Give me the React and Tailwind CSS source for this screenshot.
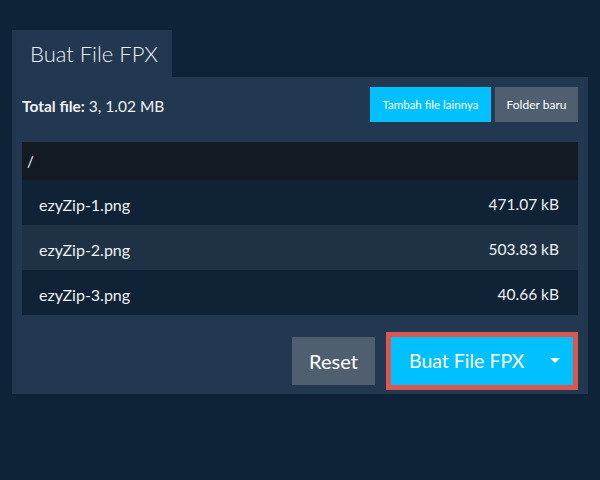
import { useState } from 'react';

const files = [
  { name: 'ezyZip-1.png', size: '471.07 kB' },
  { name: 'ezyZip-2.png', size: '503.83 kB' },
  { name: 'ezyZip-3.png', size: '40.66 kB' },
];

function App() {
  const [list] = useState(files);

  return (
    <div className="min-h-[480px] bg-[#0f2338] px-3 pt-[30px] text-[#eef1f4]" style={{ fontFamily: 'Lato, "Open Sans", sans-serif' }}>
      {/* Tab */}
      <div className="flex h-[47px] w-[160px] items-center bg-[#223750] pl-[18px] text-[22px] font-light">
        Buat File FPX
      </div>

      {/* Panel */}
      <div className="bg-[#223750] px-[10px] pt-[10px] pb-[9px]">
        <div className="flex h-[35px] items-center justify-between">
          <div className="pt-1 text-[15.5px]">
            <span className="font-bold">Total file:</span> 3, 1.02 MB
          </div>
          <div className="flex h-full gap-1">
            <button className="h-full w-[121px] bg-[#00c0ff] text-[11.5px] text-white">Tambah file lainnya</button>
            <button className="h-full w-[83px] bg-[#4f5f70] text-[12px] text-white">Folder baru</button>
          </div>
        </div>

        {/* File table */}
        <div className="mt-5">
          <div className="flex h-[38px] items-center bg-[#141a24] pl-[5px] text-[15px]">/</div>
          {list.map((f, i) => (
            <div
              key={f.name}
              className={`flex h-[45px] items-center justify-between pl-[17px] pr-[19px] pt-1 text-[16px] ${
                i % 2 === 1 ? 'bg-[#1e3145]' : 'bg-[#0f2236]'
              }`}
            >
              <span>{f.name}</span>
              <span className="text-[15.5px]">{f.size}</span>
            </div>
          ))}
        </div>

        {/* Actions */}
        <div className="mt-[22px] flex justify-end gap-4 pr-[5px]">
          <button className="h-[48px] w-[83px] bg-[#4f5f70] text-[20px] text-white">Reset</button>
          <button className="flex h-[48px] w-[182px] items-center justify-between bg-[#00c0ff] pl-[18px] pr-[13px] text-[19.5px] text-white outline-[5px] outline-solid outline-[#d9574f]">
            <span>Buat File FPX</span>
            <svg width="10" height="6" viewBox="0 0 10 6">
              <path d="M0 0 L10 0 L5 5 Z" fill="white" />
            </svg>
          </button>
        </div>
      </div>
    </div>
  );
}

export default App;
